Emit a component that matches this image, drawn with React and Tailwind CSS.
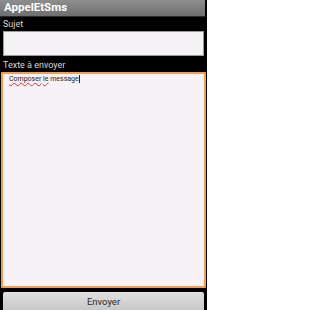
import React from "react";

function App() {
  return (
    <div
      className="w-[207px] h-[310px] bg-black flex flex-col overflow-hidden"
      style={{ fontFamily: '"Roboto", "DejaVu Sans", sans-serif' }}
    >
      <div className="h-[17px] mr-[2px] bg-gradient-to-b from-[#8e8e8e] to-[#6e6e6e] border-b border-[#2a2a2a] flex items-center px-[4px]">
        <span className="text-white font-bold text-[11.5px] leading-none">AppelEtSms</span>
      </div>
      <div className="text-[#d8d8d8] text-[9px] leading-none px-[3px] mt-[3px]">Sujet</div>
      <div className="mx-[3px] mt-[2px] h-[25px] bg-[#f4f2f5] border border-[#9a9a9a]"></div>
      <div className="text-[#d8d8d8] text-[9px] leading-none px-[3px] mt-[5px]">Texte à envoyer</div>
      <div className="mx-[1px] mt-[2px] h-[216px] bg-[#f6f2f6] border-2 border-[#f0a050] rounded-[1px] px-[6px] pt-[1px] text-[7px] leading-[9px] text-[#222]">
        <span className="underline decoration-wavy decoration-[#e03030]">Composer</span>{" "}
        <span className="underline decoration-wavy decoration-[#e03030]">le</span> message
        <span className="inline-block w-[1px] h-[8px] bg-[#222] align-middle"></span>
      </div>
      <div className="mx-[3px] mt-[4px] flex-1 bg-gradient-to-b from-[#e0e0e0] to-[#c8c8c8] rounded-t-[2px] flex items-center justify-center pt-[2px]">
        <span className="text-[#2a2a2a] text-[9.5px]">Envoyer</span>
      </div>
    </div>
  );
}

export default App;
